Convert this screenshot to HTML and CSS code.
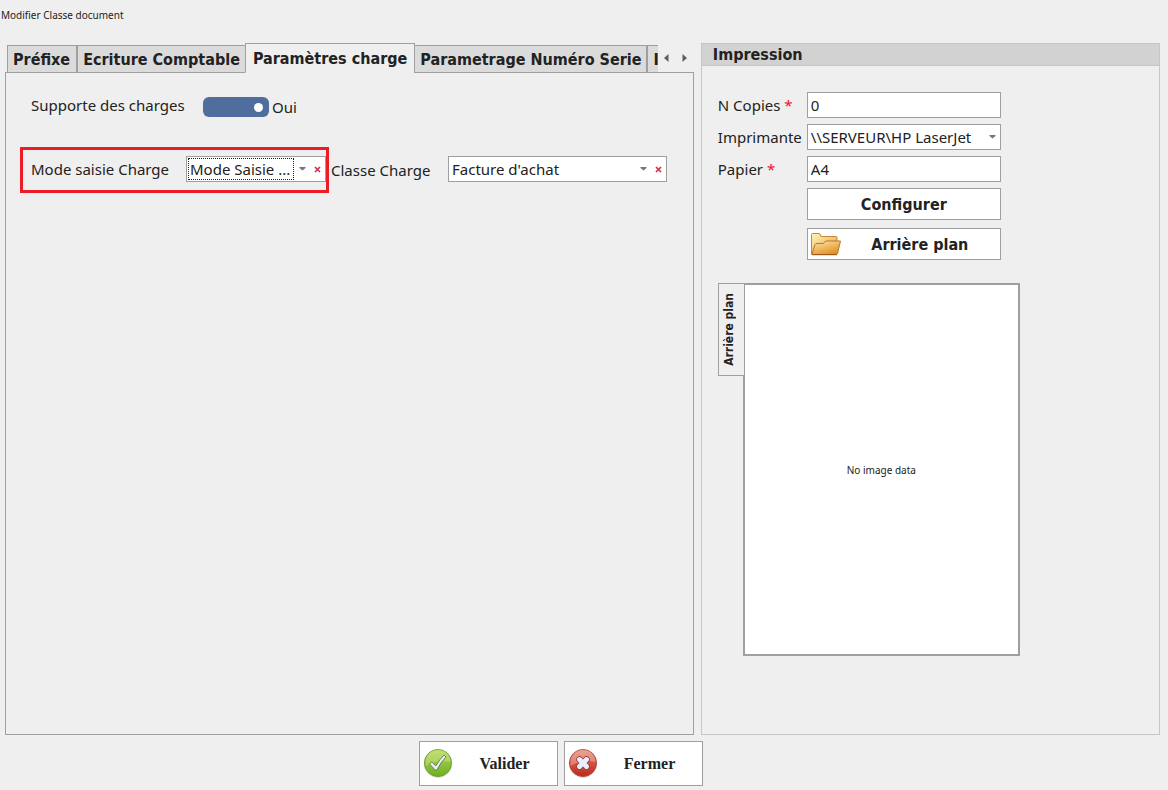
FILE: index.html
```html
<!DOCTYPE html>
<html lang="fr">
<head>
<meta charset="utf-8">
<meta name="viewport" content="width=device-width, initial-scale=1">
<title>Modifier Classe document</title>
<link rel="stylesheet" href="styles.css">
</head>
<body>
<form class="window">
  <h1 class="window-title">Modifier Classe document</h1>
  <main class="columns">
    <section class="tabs">
      <div class="tab-header">
        <div class="tab-strip" role="tablist">
          <button type="button" role="tab" class="tab tab-first">Préfixe</button>
          <button type="button" role="tab" class="tab">Ecriture Comptable</button>
          <button type="button" role="tab" class="tab tab-active" aria-selected="true">Paramètres charge</button>
          <button type="button" role="tab" class="tab">Parametrage Numéro Serie</button>
          <button type="button" role="tab" class="tab tab-cut">I</button>
        </div>
        <button type="button" class="scroll" aria-label="Onglets précédents"><svg width="5" height="8" viewBox="0 0 5 8"><path d="M4.500 0v8L0 4z" fill="#5f5f5f"/></svg></button>
        <button type="button" class="scroll" aria-label="Onglets suivants"><svg width="5" height="8" viewBox="0 0 5 8"><path d="M.5 0v8L5 4z" fill="#5f5f5f"/></svg></button>
      </div>
      <div class="tab-panel" role="tabpanel">
        <div class="switch-row">
          <label class="switch-label" for="charges">Supporte des charges</label>
          <input class="switch" id="charges" type="checkbox" role="switch" checked>
          <span>Oui</span>
        </div>
        <div class="charge-row">
          <div class="highlight">
            <label class="mode-label" for="mode">Mode saisie Charge</label>
            <div class="combo combo-mode">
              <select class="combo-select focused" id="mode"><option>Mode Saisie ...</option></select>
              <svg class="arrow" width="7" height="4" viewBox="0 0 7 4"><path d="M.5 0h6v1L3.500 3.500L.5 1z" fill="#777"/></svg>
              <button type="button" class="clear" aria-label="Effacer le mode"><svg width="7" height="7" viewBox="0 0 7 7"><path d="M1 1l5 5M6 1L1 6" stroke="#d0334a" stroke-width="1.700"/></svg></button>
            </div>
          </div>
          <label class="class-label" for="classe">Classe Charge</label>
          <div class="combo combo-class">
            <select class="combo-select" id="classe"><option>Facture d'achat</option></select>
            <svg class="arrow" width="7" height="4" viewBox="0 0 7 4"><path d="M.5 0h6v1L3.500 3.500L.5 1z" fill="#777"/></svg>
            <button type="button" class="clear" aria-label="Effacer la classe"><svg width="7" height="7" viewBox="0 0 7 7"><path d="M1 1l5 5M6 1L1 6" stroke="#d0334a" stroke-width="1.700"/></svg></button>
          </div>
        </div>
      </div>
    </section>

    <section class="group">
      <h2 class="group-title">Impression</h2>
      <div class="group-body">
        <div class="print-form">
          <label for="copies">N Copies <span class="required">*</span></label>
          <input class="text-input" id="copies" type="text" value="0">
          <label for="printer">Imprimante</label>
          <div class="combo">
            <select class="combo-select" id="printer"><option>\\SERVEUR\HP LaserJet</option></select>
            <svg class="arrow arrow-last" width="7" height="4" viewBox="0 0 7 4"><path d="M.5 0h6v1L3.500 3.500L.5 1z" fill="#777"/></svg>
          </div>
          <label for="paper">Papier <span class="required">*</span></label>
          <input class="text-input" id="paper" type="text" value="A4">
        </div>
        <div class="print-actions">
          <button type="button" class="button"><span class="button-text">Configurer</span></button>
          <button type="button" class="button button-folder">
            <svg width="32" height="24" viewBox="0 0 32 24">
              <defs>
                <linearGradient id="fb" x1="0" y1="0" x2="1" y2="1"><stop offset="0" stop-color="#fff3b8"/><stop offset="1" stop-color="#e8a23c"/></linearGradient>
                <linearGradient id="ff" x1="0" y1="0" x2="0.600" y2="1"><stop offset="0" stop-color="#fde9ae"/><stop offset="1" stop-color="#e29222"/></linearGradient>
              </defs>
              <path d="M1.500 22V2.500Q1.500 1.500 2.500 1.500H9Q10 1.500 10.500 3L11 4.500H26q1 0 1 1V22z" fill="url(#fb)" stroke="#c78836"/>
              <path d="M1.800 22.500L5 12.500Q5.500 11.500 7 11.500H13L16 9H30.500L27.500 21.500Q27.200 22.500 26 22.500z" fill="url(#ff)" stroke="#b9752a"/>
              <path d="M2 22.700h25" stroke="#96521c"/>
            </svg>
            <span class="button-text">Arrière plan</span>
          </button>
        </div>
        <div class="preview">
          <button type="button" class="side-tab"><span class="side-text">Arrière plan</span></button>
          <div class="image-box">No image data</div>
        </div>
      </div>
    </section>
  </main>
  <footer class="footer">
    <button type="submit" class="button button-footer">
      <svg width="30" height="30" viewBox="0 0 30 30">
        <defs><linearGradient id="gr" x1="0" y1="0" x2="0" y2="1"><stop offset="0" stop-color="#b4d95c"/><stop offset="1" stop-color="#6fae22"/></linearGradient></defs>
        <circle cx="15" cy="15.500" r="14.200" fill="#d3d8ca"/>
        <circle cx="15" cy="15" r="13.500" fill="url(#gr)" stroke="#6f9f35"/>
        <path d="M2.500 14a12.500 12.500 0 0 1 25 0Q15 11 2.500 18z" fill="#d4ec8d" opacity=".4"/>
        <path d="M6.500 16L9 13.800L12.700 18Q17 11 21 7L23 9Q17.500 14.500 13.800 22H11.800Q9.500 18.500 6.500 16z" fill="#e9eefa" stroke="#5f7f45" stroke-width=".9"/>
      </svg>
      <span class="button-text">Valider</span>
    </button>
    <button type="button" class="button button-footer">
      <svg width="30" height="30" viewBox="0 0 30 30">
        <defs><linearGradient id="rd" x1="0" y1="0" x2="0" y2="1"><stop offset="0" stop-color="#e58a78"/><stop offset=".5" stop-color="#d6503f"/><stop offset="1" stop-color="#b82a1f"/></linearGradient></defs>
        <circle cx="15" cy="15.500" r="14.200" fill="#ddd3d1"/>
        <circle cx="15" cy="15" r="13.500" fill="url(#rd)" stroke="#b4473b"/>
        <path d="M2.500 14a12.500 12.500 0 0 1 25 0Q15 11 2.500 18z" fill="#f7c9bb" opacity=".4"/>
        <path d="M11.500 11.500l7 7M18.500 11.500l-7 7" stroke="#8f4744" stroke-width="6.500" stroke-linecap="round"/>
        <path d="M11.500 11.500l7 7M18.500 11.500l-7 7" stroke="#eaf0fb" stroke-width="4.800" stroke-linecap="round"/>
      </svg>
      <span class="button-text">Fermer</span>
    </button>
  </footer>
</form>
</body>
</html>
```
FILE: styles.css
```css
* { box-sizing: border-box; }

body {
  margin: 0;
  background: #efefef;
  color: #222;
  font: 15px/20px "Noto Sans", "Open Sans", sans-serif;
}

button, input, select {
  margin: 0;
  padding: 0;
  border: 0;
  border-radius: 0;
  background: none;
  color: inherit;
  font: inherit;
}

svg { display: block; flex: none; fill: none; }

.window {
  display: flex;
  flex-direction: column;
  min-height: 100vh;
  padding: 8px 8px 4px 1px;
}

.window-title {
  margin: 0;
  font-size: 10px;
  line-height: 14px;
  font-weight: 400;
}

.columns {
  flex: 1;
  display: grid;
  grid-template-columns: 3fr 2fr;
  gap: 7px;
  padding: 21px 0 6px 4px;
}

.tabs { display: flex; flex-direction: column; min-width: 0; }

.tab-header {
  display: flex;
  align-items: center;
  padding-left: 2px;
}

.tab-strip {
  position: relative;
  z-index: 1;
  flex: 1;
  display: flex;
  align-items: flex-end;
  min-width: 0;
  overflow: hidden;
  margin-bottom: -1px;
}

.tab, .group-title, .button {
  font: 700 16px/20px "DejaVu Sans Condensed", "DejaVu Sans", sans-serif;
}

.tab {
  flex: none;
  height: 28px;
  padding: 2px 5px 0;
  border: 1px solid #9f9f9f;
  background: #dbdbdb;
  white-space: nowrap;
}

.tab-first { padding-right: 6px; }

.tab-active {
  height: 30px;
  margin: 0 -1px;
  padding: 2px 7px 0;
  border-bottom-color: #efefef;
  background: #efefef;
}

.scroll {
  display: flex;
  align-items: center;
  justify-content: center;
  width: 18px;
  height: 29px;
}

.tab-panel {
  flex: 1;
  padding: 22px 14px;
  border: 1px solid #9f9f9f;
}

.switch-row {
  display: flex;
  align-items: center;
  height: 24px;
  padding-left: 11px;
}

.switch-label { width: 172px; padding-bottom: 4px; }

.switch {
  appearance: none;
  display: flex;
  align-items: center;
  justify-content: flex-end;
  width: 66px;
  height: 20px;
  margin-right: 3px;
  padding-right: 6px;
  border-radius: 6px;
  background: #4f6e9e;
}

.switch::before {
  content: "";
  width: 9px;
  height: 9px;
  border-radius: 50%;
  background: #fff;
}

.switch:not(:checked) { justify-content: flex-start; padding-left: 6px; }

.charge-row {
  display: flex;
  align-items: center;
  margin-top: 28px;
}

.highlight {
  display: flex;
  align-items: center;
  height: 46px;
  padding: 0 0 2px 8px;
  border: 3px solid #ed1c24;
}

.mode-label { width: 155px; }
.class-label { width: 119px; padding-left: 2px; }

.combo {
  display: flex;
  align-items: center;
  height: 26px;
  padding: 1px;
  border: 1px solid #9f9f9f;
  background: #fff;
}

.combo-mode { width: 140px; }
.combo-class { width: 219px; margin-bottom: 2px; }

.combo-select {
  appearance: none;
  flex: 1;
  min-width: 0;
  height: 22px;
  padding: 0 2px;
  outline: none;
  white-space: nowrap;
}

.focused { outline: 1px dotted #222; outline-offset: -1px; }

.arrow { margin: 0 5px; pointer-events: none; }
.arrow-last { margin-right: 3px; }

.clear {
  display: flex;
  align-items: center;
  justify-content: center;
  width: 13px;
  height: 22px;
}

.group {
  display: flex;
  flex-direction: column;
  border: 1px solid #c6c6c6;
}

.group-title {
  margin: 0;
  padding: 1px 11px 0;
  border-bottom: 1px solid #c6c6c6;
  background: #d2d2d2;
}

.group-body { padding: 26px 16px; }

.print-form {
  display: grid;
  grid-template-columns: 89px 194px;
  row-gap: 6px;
  align-items: center;
}

.required { color: #f01030; }

.text-input {
  height: 26px;
  padding: 0 3px;
  border: 1px solid #9f9f9f;
  background: #fff;
}

.print-actions {
  display: grid;
  gap: 8px;
  width: 194px;
  margin: 6px 0 0 89px;
}

.button {
  display: flex;
  align-items: center;
  height: 32px;
  border: 1px solid #9f9f9f;
  background: #fff;
}

.button-folder { padding: 0 2px; }

.button-text {
  flex: 1;
  padding-top: 2px;
  text-align: center;
}

.preview {
  display: flex;
  align-items: flex-start;
  margin-top: 23px;
}

.side-tab {
  position: relative;
  width: 27px;
  height: 93px;
  margin-right: -2px;
  padding: 4px 4px 0 0;
  border: 1px solid #9f9f9f;
  background: #efefef;
  font: 700 12px/16px "DejaVu Sans Condensed", "DejaVu Sans", sans-serif;
}

.side-text {
  writing-mode: vertical-rl;
  transform: rotate(180deg);
}

.image-box {
  display: flex;
  align-items: center;
  justify-content: center;
  width: 277px;
  height: 373px;
  border: 2px solid #9f9f9f;
  background: #fff;
  font-size: 10px;
}

.footer {
  display: flex;
  justify-content: center;
  gap: 6px;
  padding-right: 40px;
}

.footer .button-footer {
  width: 139px;
  height: 45px;
  padding: 0 0 2px 3px;
  font-family: "Liberation Serif", "Times New Roman", serif;
}
```
